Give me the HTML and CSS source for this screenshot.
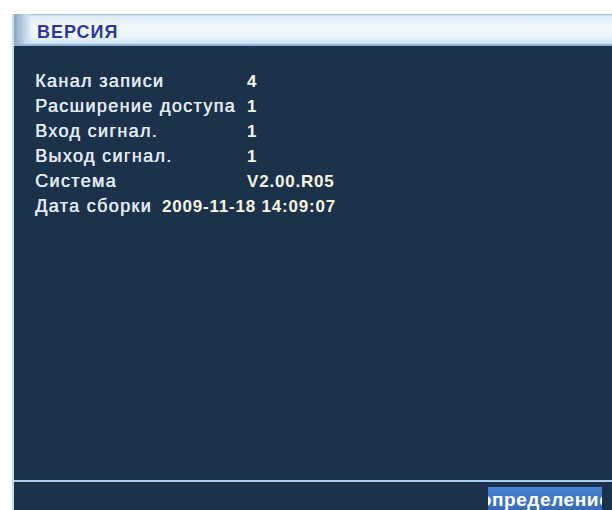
FILE: index.html
```html
<!DOCTYPE html>
<html lang="ru">
<head>
<meta charset="utf-8">
<title>Версия</title>
<link rel="stylesheet" href="styles.css">
</head>
<body>
<div class="window">
  <div class="titlebar">
    <div class="title-cap"></div>
    <div class="title">ВЕРСИЯ</div>
  </div>
  <div class="content">
    <div class="info">
      <div class="row"><span class="label">Канал записи</span><span class="value">4</span></div>
      <div class="row"><span class="label">Расширение доступа</span><span class="value">1</span></div>
      <div class="row"><span class="label">Вход сигнал.</span><span class="value">1</span></div>
      <div class="row"><span class="label">Выход сигнал.</span><span class="value">1</span></div>
      <div class="row"><span class="label">Система</span><span class="value">V2.00.R05</span></div>
      <div class="row row-inline"><span class="label">Дата сборки</span><span class="value">2009-11-18 14:09:07</span></div>
    </div>
  </div>
  <div class="footer">
    <div class="button"><span>определение</span></div>
  </div>
</div>
</body>
</html>
```
FILE: styles.css
```css
html, body {
  margin: 0;
  padding: 0;
  background: #ffffff;
  width: 612px;
  height: 510px;
  overflow: hidden;
  font-family: "Liberation Sans", Arial, sans-serif;
}

.window {
  margin: 14px 0 0 12px;
  height: 496px;
  display: flex;
  flex-direction: column;
  background: #1c324b;
  border-left: 2px solid #c9def2;
}

.titlebar {
  height: 30px;
  display: flex;
  align-items: center;
  background: linear-gradient(to bottom, #9fb7cc 0, #dcecf8 2px, #f2f9fe 40%, #eaf5fd 75%, #c9e0f2 100%);
  border-bottom: 2px solid #8fb2d6;
}

.title-cap {
  width: 18px;
  align-self: stretch;
  background: linear-gradient(to right, #8ea7bd, #c8dcec 70%, rgba(220,236,248,0));
}

.title {
  margin: 6px 0 0 5px;
  font-weight: bold;
  font-size: 18px;
  color: #2d379a;
  letter-spacing: 1px;
}

.content {
  flex: 1;
  padding: 23px 0 0 21px;
  border-bottom: 2px solid #a9cdee;
}

.info {
  display: flex;
  flex-direction: column;
}

.row {
  height: 25px;
  display: flex;
  align-items: center;
}

.label {
  width: 212px;
  color: #e2ebf9;
  font-size: 18px;
  letter-spacing: 1.35px;
  text-shadow: 0.4px 0 0 #e2ebf9;
}

.row-inline .label {
  width: auto;
  margin-right: 10px;
}

.value {
  color: #f5f5e4;
  font-weight: bold;
  font-size: 17px;
  letter-spacing: 0.8px;
}

.footer {
  height: 28px;
  display: flex;
  justify-content: flex-end;
  align-items: flex-start;
}

.button {
  width: 114px;
  height: 26px;
  margin: 5px 10px 0 0;
  background: linear-gradient(to bottom, #4a86d2, #3567b3);
  display: flex;
  justify-content: center;
  align-items: center;
  overflow: hidden;
  white-space: nowrap;
}

.button span {
  flex: none;
  color: #ffffff;
  font-weight: bold;
  font-size: 19px;
  letter-spacing: 0.6px;
}
```
